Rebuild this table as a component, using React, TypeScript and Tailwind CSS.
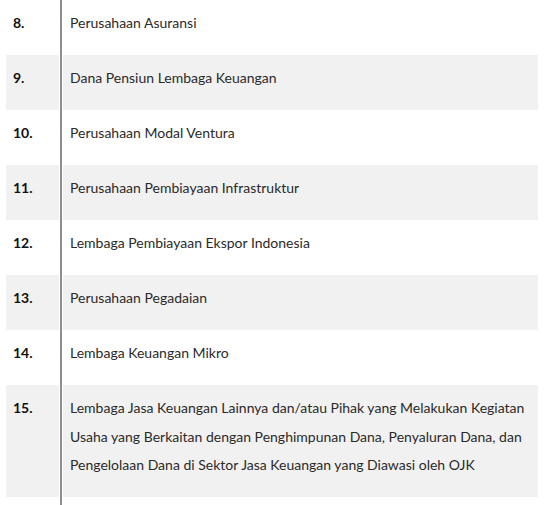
import React from 'react';

const rows = [
  { no: '8.', text: 'Perusahaan Asuransi' },
  { no: '9.', text: 'Dana Pensiun Lembaga Keuangan' },
  { no: '10.', text: 'Perusahaan Modal Ventura' },
  { no: '11.', text: 'Perusahaan Pembiayaan Infrastruktur' },
  { no: '12.', text: 'Lembaga Pembiayaan Ekspor Indonesia' },
  { no: '13.', text: 'Perusahaan Pegadaian' },
  { no: '14.', text: 'Lembaga Keuangan Mikro' },
  {
    no: '15.',
    text: 'Lembaga Jasa Keuangan Lainnya dan/atau Pihak yang Melakukan Kegiatan Usaha yang Berkaitan dengan Penghimpunan Dana, Penyaluran Dana, dan Pengelolaan Dana di Sektor Jasa Keuangan yang Diawasi oleh OJK',
  },
];

const App = () => {
  return (
    <div className="w-[551px] h-[505px] overflow-hidden bg-white font-['Lato','Noto_Sans',sans-serif] text-[14px] text-[#2a2a2a]">
      <div className="pl-[6px] pr-[13px]">
        {rows.map((row, i) => {
          const bg = i % 2 === 1 ? 'bg-[#f1f1f1]' : 'bg-white';
          return (
            <div key={row.no} className="flex gap-[1px]">
              <div className={`w-[53px] shrink-0 pl-[7px] pt-[9px] pb-[17.5px] leading-[28.5px] font-bold text-[#111] ${bg}`}>
                {row.no}
              </div>
              <div className="w-[2px] shrink-0 bg-[#8e8e8e]" />
              <div className={`flex-1 pl-[7px] pr-[4px] pt-[9px] pb-[17.5px] leading-[28.5px] ${bg}`}>
                {row.text}
              </div>
            </div>
          );
        })}
        {/* tail of the divider under the last row */}
        <div className="flex gap-[1px] h-[10px]">
          <div className="w-[53px] shrink-0" />
          <div className="w-[2px] shrink-0 bg-[#8e8e8e]" />
        </div>
      </div>
    </div>
  );
};

export default App;
